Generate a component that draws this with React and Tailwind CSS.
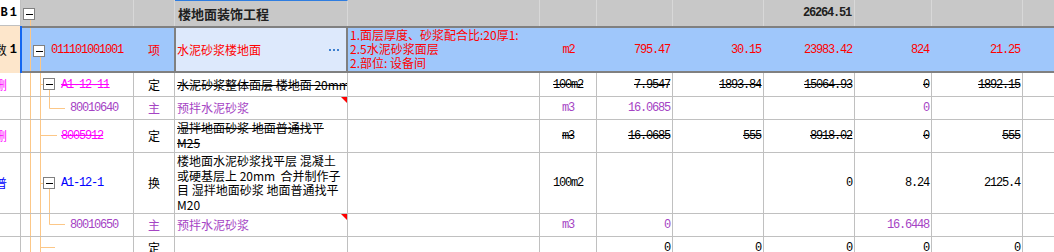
import React from 'react';

const MONO = "font-['Liberation_Mono','Noto_Sans_CJK_SC',monospace] tracking-[-1.2px]";
const LINE = '#fcc787';

// column widths (each includes its right border line)
const W = ['w-[21px]', 'w-[113px]', 'w-[41px]', 'w-[173px]', 'w-[192px]', 'w-[57px]', 'w-[76px]', 'w-[91px]', 'w-[91px]', 'w-[77px]', 'w-[91px]'];

const C = ({ i, className = '', children }) => (
    <div className={`${W[i]} shrink-0 border-r border-[#c0c0c0] flex items-center overflow-hidden whitespace-nowrap relative ${className}`}>
        {children}
    </div>
);

const Num = ({ i, className = '', children }) => (
    <C i={i} className={`justify-end pr-[2px] ${MONO} ${className}`}>{children}</C>
);

const MinusBox = ({ x, y }) => (
    <g>
        <rect x={x + 0.5} y={y + 0.5} width="11" height="11" fill="#fff" stroke="#808080" />
        <line x1={x + 3} y1={y + 6.5} x2={x + 10} y2={y + 6.5} stroke="#000" />
    </g>
);

// tree connector drawing inside the code cell
const Tree = ({ h, children }) => (
    <svg className="absolute left-0 top-0 pointer-events-none" width="60" height={h}>
        <g stroke={LINE} strokeWidth="1">{children}</g>
    </svg>
);

const RedTri = () => (
    <div className="absolute top-0 right-0 w-0 h-0 border-t-[6px] border-t-[#ff0000] border-l-[6px] border-l-transparent" />
);

const Row = ({ h, children }) => (
    <div className={`flex ${h} border-b border-[#c0c0c0] bg-white`}>
        {children}
        <div className="flex-1" />
    </div>
);

export default function App() {
    return (
        <div className="w-[1054px] h-[252px] overflow-hidden bg-white text-[12px] text-black font-['Noto_Sans_CJK_SC',sans-serif]">
            {/* chapter row */}
            <div className="flex h-[26px]">
                <div className="w-[21px] shrink-0 bg-white border-r border-b border-[#c0c0c0] flex items-center justify-end pr-[3px] overflow-hidden whitespace-nowrap font-bold font-['Liberation_Mono',monospace]">
                    <span>B</span><span className="ml-[2px]">1</span>
                </div>
                <div className="flex flex-1 bg-[#c8c8c8]">
                    <div className="w-[113px] shrink-0 border-r border-[#d8d8d8] relative">
                        <svg className="absolute left-0 top-0" width="60" height="26">
                            <line x1="9.5" y1="20" x2="9.5" y2="26" stroke={LINE} />
                            <MinusBox x={2} y={8} />
                        </svg>
                    </div>
                    <div className="w-[41px] shrink-0 border-r border-[#d8d8d8]" />
                    <div className="w-[173px] shrink-0 border-r border-t border-[#d8d8d8] border-t-[#2f7de0] flex items-center pl-[3px] font-bold text-[13px] text-[#202020]">
                        楼地面装饰工程
                    </div>
                    <div className="w-[192px] shrink-0 border-r border-[#d8d8d8]" />
                    <div className="w-[57px] shrink-0 border-r border-[#d8d8d8]" />
                    <div className="w-[76px] shrink-0 border-r border-[#d8d8d8]" />
                    <div className="w-[91px] shrink-0 border-r border-[#d8d8d8]" />
                    <div className={`w-[91px] shrink-0 border-r border-[#d8d8d8] flex items-center justify-end pr-[3px] font-bold text-[#202020] ${MONO}`}>
                        26264.51
                    </div>
                    <div className="w-[77px] shrink-0 border-r border-[#d8d8d8]" />
                    <div className="w-[91px] shrink-0 border-r border-[#d8d8d8]" />
                </div>
            </div>

            {/* selected bill item row */}
            <div className="flex h-[47px]">
                <div className="w-[20px] shrink-0 bg-[#fde6cb] flex items-center justify-end pr-[3px] overflow-hidden whitespace-nowrap">
                    <span>数</span><span className="ml-[3px] font-bold font-['Liberation_Mono',monospace]">1</span>
                </div>
                <div className="w-[2px] shrink-0 bg-[#1366f0]" />
                <div className="flex flex-1 border-y-2 border-[#808080] bg-[#9fc7fb] text-[#ff0000]">
                    <div className={`w-[112px] shrink-0 relative flex items-center pl-[29px] ${MONO}`}>
                        <Tree h={43}>
                            <line x1="8.5" y1="0" x2="8.5" y2="43" />
                            <line x1="18.5" y1="29" x2="18.5" y2="43" />
                        </Tree>
                        <svg className="absolute left-0 top-0" width="40" height="43"><MinusBox x={11} y={17} /></svg>
                        <span className="relative">011101001001</span>
                    </div>
                    <div className="w-[40px] shrink-0 flex items-center justify-center">项</div>
                    <div className="w-[174px] shrink-0 border-x-2 border-[#808080] bg-[#dde9fc] flex items-center pl-[1px]">
                        <span>水泥砂浆楼地面</span>
                        <div className="ml-auto mr-[7px] flex gap-[2px]">
                            <span className="w-[2px] h-[2px] bg-[#3d80cf]" />
                            <span className="w-[2px] h-[2px] bg-[#3d80cf]" />
                            <span className="w-[2px] h-[2px] bg-[#3d80cf]" />
                        </div>
                    </div>
                    <div className="w-[192px] shrink-0 pl-[2px] leading-[14px] whitespace-nowrap overflow-hidden">
                        <div>1.面层厚度、砂浆配合比:20厚1:</div>
                        <div>2.5水泥砂浆面层</div>
                        <div>2.部位: 设备间</div>
                    </div>
                    <div className={`w-[57px] shrink-0 flex items-center justify-center ${MONO}`}>m2</div>
                    <div className={`w-[76px] shrink-0 flex items-center justify-end pr-[3px] ${MONO}`}>795.47</div>
                    <div className={`w-[91px] shrink-0 flex items-center justify-end pr-[3px] ${MONO}`}>30.15</div>
                    <div className={`w-[91px] shrink-0 flex items-center justify-end pr-[3px] ${MONO}`}>23983.42</div>
                    <div className={`w-[77px] shrink-0 flex items-center justify-end pr-[3px] ${MONO}`}>824</div>
                    <div className={`w-[91px] shrink-0 flex items-center justify-end pr-[3px] ${MONO}`}>21.25</div>
                </div>
            </div>

            {/* A1-12-11 deleted quota */}
            <Row h="h-[24px]">
                <C i={0} className="justify-end pr-[13px] text-[#ff00ff]">删</C>
                <C i={1} className={`pl-[40px] text-[#ff00ff] line-through ${MONO}`}>
                    <Tree h={23}>
                        <line x1="9.5" y1="0" x2="9.5" y2="23" />
                        <line x1="19.5" y1="0" x2="19.5" y2="23" />
                        <line x1="19.5" y1="11.5" x2="22" y2="11.5" />
                        <line x1="28.5" y1="17" x2="28.5" y2="23" />
                    </Tree>
                    <svg className="absolute left-0 top-0" width="40" height="23"><MinusBox x={22} y={5} /></svg>
                    <span className="relative">A1-12-11</span>
                </C>
                <C i={2} className="justify-center">定</C>
                <C i={3} className="pl-[2px] line-through">水泥砂浆整体面层 楼地面 20mm</C>
                <C i={4} />
                <C i={5} className={`justify-center line-through ${MONO}`}>100m2</C>
                <Num i={6} className="line-through">7.9547</Num>
                <Num i={7} className="line-through">1893.84</Num>
                <Num i={8} className="line-through">15064.93</Num>
                <Num i={9} className="line-through">0</Num>
                <Num i={10} className="line-through">1892.15</Num>
            </Row>

            {/* 80010640 main material */}
            <Row h="h-[23px]">
                <C i={0} />
                <C i={1} className={`pl-[49px] text-[#a544c4] ${MONO}`}>
                    <Tree h={22}>
                        <line x1="9.5" y1="0" x2="9.5" y2="22" />
                        <line x1="19.5" y1="0" x2="19.5" y2="22" />
                        <line x1="28.5" y1="0" x2="28.5" y2="11.5" />
                        <line x1="28.5" y1="11.5" x2="44" y2="11.5" />
                    </Tree>
                    <span className="relative">80010640</span>
                </C>
                <C i={2} className="justify-center text-[#a544c4]">主</C>
                <C i={3} className="pl-[2px] text-[#a544c4]">预拌水泥砂浆<RedTri /></C>
                <C i={4} />
                <C i={5} className={`justify-center text-[#a544c4] ${MONO}`}>m3</C>
                <Num i={6} className="text-[#a544c4]">16.0685</Num>
                <Num i={7} />
                <Num i={8} />
                <Num i={9} className="text-[#a544c4]">0</Num>
                <Num i={10} />
            </Row>

            {/* 8005912 deleted */}
            <Row h="h-[33px]">
                <C i={0} className="justify-end pr-[13px] text-[#ff00ff]">删</C>
                <C i={1} className={`pl-[40px] text-[#ff00ff] line-through ${MONO}`}>
                    <Tree h={32}>
                        <line x1="9.5" y1="0" x2="9.5" y2="32" />
                        <line x1="19.5" y1="0" x2="19.5" y2="32" />
                        <line x1="19.5" y1="15.5" x2="36" y2="15.5" />
                    </Tree>
                    <span className="relative">8005912</span>
                </C>
                <C i={2} className="justify-center">定</C>
                <C i={3} className="items-start pl-[2px] pt-[1px] leading-[14.5px] line-through">
                    <div>湿拌地面砂浆 地面普通找平<br />M25</div>
                </C>
                <C i={4} />
                <C i={5} className={`justify-center line-through ${MONO}`}>m3</C>
                <Num i={6} className="line-through">16.0685</Num>
                <Num i={7} className="line-through">555</Num>
                <Num i={8} className="line-through">8918.02</Num>
                <Num i={9} className="line-through">0</Num>
                <Num i={10} className="line-through">555</Num>
            </Row>

            {/* A1-12-1 replaced quota */}
            <Row h="h-[61px]">
                <C i={0} className="justify-end pr-[13px] text-[#0000ff]">普</C>
                <C i={1} className={`pl-[40px] text-[#0000ff] ${MONO}`}>
                    <Tree h={60}>
                        <line x1="9.5" y1="0" x2="9.5" y2="60" />
                        <line x1="19.5" y1="0" x2="19.5" y2="60" />
                        <line x1="19.5" y1="30.5" x2="22" y2="30.5" />
                        <line x1="28.5" y1="36" x2="28.5" y2="60" />
                    </Tree>
                    <svg className="absolute left-0 top-0" width="40" height="60"><MinusBox x={22} y={24} /></svg>
                    <span className="relative">A1-12-1</span>
                </C>
                <C i={2} className="justify-center">换</C>
                <C i={3} className="items-start pl-[2px] pt-[1px] leading-[14.5px]">
                    <div className="whitespace-pre">{'楼地面水泥砂浆找平层 混凝土\n或硬基层上 20mm  合并制作子\n目 湿拌地面砂浆 地面普通找平\nM20'}</div>
                </C>
                <C i={4} />
                <C i={5} className={`justify-center ${MONO}`}>100m2</C>
                <Num i={6} />
                <Num i={7} />
                <Num i={8}>0</Num>
                <Num i={9}>8.24</Num>
                <Num i={10}>2125.4</Num>
            </Row>

            {/* 80010650 main material */}
            <Row h="h-[23px]">
                <C i={0} />
                <C i={1} className={`pl-[49px] text-[#a544c4] ${MONO}`}>
                    <Tree h={22}>
                        <line x1="9.5" y1="0" x2="9.5" y2="22" />
                        <line x1="19.5" y1="0" x2="19.5" y2="22" />
                        <line x1="28.5" y1="0" x2="28.5" y2="10.5" />
                        <line x1="28.5" y1="10.5" x2="44" y2="10.5" />
                    </Tree>
                    <span className="relative">80010650</span>
                </C>
                <C i={2} className="justify-center text-[#a544c4]">主</C>
                <C i={3} className="pl-[2px] text-[#a544c4]">预拌水泥砂浆<RedTri /></C>
                <C i={4} />
                <C i={5} className={`justify-center text-[#a544c4] ${MONO}`}>m3</C>
                <Num i={6} className="text-[#a544c4]">0</Num>
                <Num i={7} />
                <Num i={8} />
                <Num i={9} className="text-[#a544c4]">16.6448</Num>
                <Num i={10} />
            </Row>

            {/* next quota row */}
            <Row h="h-[23px]">
                <C i={0} />
                <C i={1} className={`pl-[40px] ${MONO}`}>
                    <Tree h={22}>
                        <line x1="9.5" y1="0" x2="9.5" y2="22" />
                        <line x1="19.5" y1="0" x2="19.5" y2="22" />
                        <line x1="19.5" y1="10.5" x2="34" y2="10.5" />
                    </Tree>
                </C>
                <C i={2} className="justify-center">定</C>
                <C i={3} />
                <C i={4} />
                <C i={5} />
                <Num i={6}>0</Num>
                <Num i={7}>0</Num>
                <Num i={8}>0</Num>
                <Num i={9}>0</Num>
                <Num i={10}>0</Num>
            </Row>
        </div>
    );
}
